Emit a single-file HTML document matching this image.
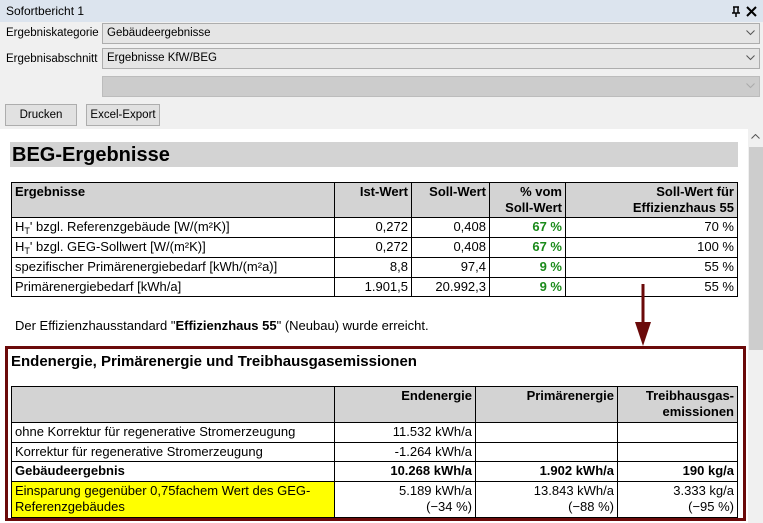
<!DOCTYPE html>
<html><head><meta charset="utf-8"><style>
*{margin:0;padding:0;box-sizing:border-box}
body{width:763px;height:523px;overflow:hidden;background:#f0f0f0;font-family:"Liberation Sans",Arial,sans-serif;position:relative;color:#000}
.a{position:absolute}
.lbl{font-size:11.5px}
.combo{position:absolute;left:102px;width:658px;height:21px;background:#e5e5e5;border:1px solid #adadad;font-size:11.5px;padding:3px 4px;line-height:13px}
.combo svg{position:absolute;right:4px;top:6px}
.btn{position:absolute;top:104px;height:22px;background:#e1e1e1;border:1px solid #adadad;font-size:11.5px;text-align:center;line-height:20px}
table{border-collapse:collapse;position:absolute;font-size:13px}
td{border:1px solid #000;padding:1px 3px;vertical-align:top;line-height:16px}
.r{text-align:right}
.h td{background:#d3d3d3;font-weight:bold}
.g{color:#1a8a1a;font-weight:bold}
sub{font-size:9px;line-height:0;vertical-align:-3px}
</style></head><body>
<div class="a" style="left:0;top:0;width:763px;height:22px;background:#dce4ee;"></div>
<div class="a" style="left:6px;top:4px;font-size:12px">Sofortbericht 1</div>
<svg class="a" style="left:731px;top:6px" width="10" height="12"><path d="M2 1H8M3 1V7M7 1V7M1 7H9M5 7V11" stroke="#000" stroke-width="1.5" fill="none"/></svg>
<svg class="a" style="left:746px;top:6px" width="11" height="11"><path d="M1 1L10 10M10 1L1 10" stroke="#000" stroke-width="2"/></svg>
<div class="a lbl" style="left:6px;top:27px">Ergebniskategorie</div>
<div class="a lbl" style="left:6px;top:53px">Ergebnisabschnitt</div>
<div class="combo" style="top:23px">Gebäudeergebnisse<svg width="9" height="6"><path d="M0.5 0.5L4.5 4.5L8.5 0.5" stroke="#555" fill="none"/></svg></div>
<div class="combo" style="top:48px">Ergebnisse KfW/BEG<svg width="9" height="6"><path d="M0.5 0.5L4.5 4.5L8.5 0.5" stroke="#555" fill="none"/></svg></div>
<div class="combo" style="top:76px;background:#cccccc;border-color:#bcbcbc"><svg width="9" height="6"><path d="M0.5 0.5L4.5 4.5L8.5 0.5" stroke="#aaa" fill="none"/></svg></div>
<div class="btn" style="left:5px;width:72px">Drucken</div>
<div class="btn" style="left:86px;width:74px">Excel-Export</div>
<div class="a" style="left:0;top:129px;width:748px;height:394px;background:#fff"></div>
<div class="a" style="left:748px;top:129px;width:15px;height:394px;background:#f0f0f0"></div>
<div class="a" style="left:749px;top:147px;width:14px;height:203px;background:#cdcdcd"></div>
<svg class="a" style="left:751px;top:134px" width="9" height="6"><path d="M0.5 4.5L4.5 0.5L8.5 4.5" stroke="#555" fill="none"/></svg>
<div class="a" style="left:10px;top:142px;width:728px;height:25px;background:#d3d3d3;font-size:20px;font-weight:bold;padding:1px 2px;line-height:24px">BEG-Ergebnisse</div>
<table style="left:11px;top:182px;width:727px">
<tr class="h" style="height:35px"><td style="width:323px">Ergebnisse</td><td class="r" style="width:77px">Ist-Wert</td><td class="r" style="width:78px">Soll-Wert</td><td class="r" style="width:76px">% vom<br>Soll-Wert</td><td class="r">Soll-Wert für<br>Effizienzhaus 55</td></tr>
<tr style="height:20px"><td>H<sub>T</sub>' bzgl. Referenzgebäude [W/(m²K)]</td><td class="r">0,272</td><td class="r">0,408</td><td class="r g">67 %</td><td class="r">70 %</td></tr>
<tr style="height:20px"><td>H<sub>T</sub>' bzgl. GEG-Sollwert [W/(m²K)]</td><td class="r">0,272</td><td class="r">0,408</td><td class="r g">67 %</td><td class="r">100 %</td></tr>
<tr style="height:20px"><td>spezifischer Primärenergiebedarf [kWh/(m²a)]</td><td class="r">8,8</td><td class="r">97,4</td><td class="r g">9 %</td><td class="r">55 %</td></tr>
<tr style="height:19px"><td>Primärenergiebedarf [kWh/a]</td><td class="r">1.901,5</td><td class="r">20.992,3</td><td class="r g">9 %</td><td class="r">55 %</td></tr>
</table>
<div class="a" style="left:15px;top:318px;font-size:13px">Der Effizienzhausstandard "<b>Effizienzhaus 55</b>" (Neubau) wurde erreicht.</div>
<svg class="a" style="left:630px;top:284px" width="26" height="66"><line x1="13" y1="0" x2="13" y2="40" stroke="#6b0a0a" stroke-width="3"/><path d="M5 38L21 38L13 62Z" fill="#6b0a0a"/></svg>
<div class="a" style="left:5px;top:346px;width:741px;height:175px;border:3px solid #6b0a0a"></div>
<div class="a" style="left:11px;top:353px;font-size:15px;font-weight:bold">Endenergie, Primärenergie und Treibhausgasemissionen</div>
<table style="left:11px;top:386px;width:727px">
<tr class="h" style="height:36px"><td style="width:323px"></td><td class="r" style="width:141px">Endenergie</td><td class="r" style="width:142px">Primärenergie</td><td class="r">Treibhausgas-<br>emissionen</td></tr>
<tr style="height:20px"><td>ohne Korrektur für regenerative Stromerzeugung</td><td class="r">11.532 kWh/a</td><td></td><td></td></tr>
<tr style="height:19px"><td>Korrektur für regenerative Stromerzeugung</td><td class="r">-1.264 kWh/a</td><td></td><td></td></tr>
<tr style="height:20px;font-weight:bold"><td>Gebäudeergebnis</td><td class="r">10.268 kWh/a</td><td class="r">1.902 kWh/a</td><td class="r">190 kg/a</td></tr>
<tr style="height:36px"><td style="background:#ffff00">Einsparung gegenüber 0,75fachem Wert des GEG-Referenzgebäudes</td><td class="r">5.189 kWh/a<br>(−34 %)</td><td class="r">13.843 kWh/a<br>(−88 %)</td><td class="r">3.333 kg/a<br>(−95 %)</td></tr>
</table>
</body></html>
